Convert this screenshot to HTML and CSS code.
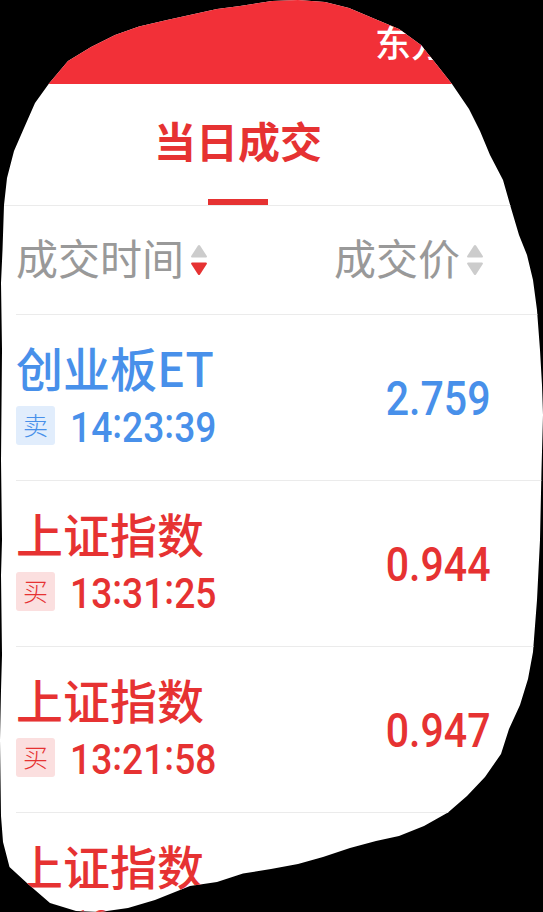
FILE: index.html
```
<!DOCTYPE html>
<html lang="zh-CN">
<head>
	<meta charset="UTF-8" />
	<meta name="viewport" content="width=device-width, initial-scale=1.0" />
	<title>当日成交</title>
	<link rel="stylesheet" href="styles.css">
</head>
<body>
	<div class="screen">
		<header class="topbar">东方</header>
		<nav class="tabs">
			<a class="tab">当日成交</a>
		</nav>
		<div class="list-head">
			<div class="col">成交时间
				<svg class="sort" viewBox="0 0 18 32" width="18" height="32">
					<path class="off" d="M8 1.5Q9 .5 10 1.5L16.8 12Q17.4 13.5 16 13.5H2Q.6 13.5 1.2 12Z"/>
					<path class="on" d="M8 30.5Q9 31.5 10 30.5L16.8 20Q17.4 18.5 16 18.5H2Q.6 18.5 1.2 20Z"/>
				</svg>
			</div>
			<div class="col">成交价
				<svg class="sort" viewBox="0 0 18 32" width="18" height="32">
					<path class="off" d="M8 1.5Q9 .5 10 1.5L16.8 12Q17.4 13.5 16 13.5H2Q.6 13.5 1.2 12Z"/>
					<path class="off" d="M8 30.5Q9 31.5 10 30.5L16.8 20Q17.4 18.5 16 18.5H2Q.6 18.5 1.2 20Z"/>
				</svg>
			</div>
		</div>
		<ul class="deals">
			<li class="deal sell">
				<div class="info">
					<strong class="name">创业板ET</strong>
					<div class="meta"><span class="tag">卖</span><span class="time">14<b class="colon">:</b>23<b class="colon">:</b>39</span></div>
				</div>
				<span class="price">2.759</span>
			</li>
			<li class="deal buy">
				<div class="info">
					<strong class="name">上证指数</strong>
					<div class="meta"><span class="tag">买</span><span class="time">13<b class="colon">:</b>31<b class="colon">:</b>25</span></div>
				</div>
				<span class="price">0.944</span>
			</li>
			<li class="deal buy">
				<div class="info">
					<strong class="name">上证指数</strong>
					<div class="meta"><span class="tag">买</span><span class="time">13<b class="colon">:</b>21<b class="colon">:</b>58</span></div>
				</div>
				<span class="price">0.947</span>
			</li>
			<li class="deal buy">
				<div class="info">
					<strong class="name">上证指数</strong>
					<div class="meta"><span class="tag"></span><span class="time">13</span></div>
				</div>
			</li>
		</ul>
	</div>
</body>
</html>
```
FILE: styles.css
```
*{
	box-sizing: border-box;
}
body{
	margin: 0;
	overflow: hidden;
	background: #000;
	font-family: "Noto Sans CJK SC", sans-serif;
}
/* freehand outline around the visible part */
.screen{
	width: 543px;
	height: 912px;
	overflow: hidden;
	background: #fff;
	clip-path: polygon(
		298px 0, 325px 2px, 349px 8px, 375px 19px, 399px 29px, 421px 45px, 437px 65px, 452px 84px,
		469px 109px, 480px 131px, 490px 155px, 503px 180px, 511px 208px, 519px 235px, 527px 255px,
		533px 280px, 537px 310px, 540px 350px, 542px 385px, 543px 415px, 541.5px 470px, 540px 540px,
		537px 600px, 533px 652px, 528px 679px, 520px 705px, 509px 729px, 501px 754px, 485px 777px,
		467px 796px, 448px 812.5px, 424px 826px, 399px 836px, 376px 841px, 350px 848px, 323px 857px,
		298px 864px, 271px 869px, 243px 873.5px, 217px 882px, 190px 886px, 155px 900px, 128px 908px,
		100px 912px, 76px 911px, 50px 903px, 28px 884px, 9.5px 867px, 3px 842px, 1px 816px,
		0 740px, 1px 690px, 2px 655px, 1px 575px, 2px 540px, 1px 460px, 2px 350px, 1px 283px, 2.5px 250px,
		4px 205px, 7px 178px, 14px 151px, 24px 128px, 35px 103px, 49px 83.5px, 68px 61px,
		91px 47px, 115px 35px, 139px 26.5px, 167px 20px, 217px 9px, 240px 6px, 272px 1px
	);
}
.topbar{
	height: 84px;
	padding: 14px 0 0 375px;
	background: #f23038;
	color: #fff;
	font-size: 36px;
	font-weight: 500;
	line-height: 54px;
}
.tabs{
	display: flex;
	height: 122px;
	padding-left: 154px;
	border-bottom: 1px solid #ebebeb;
}
.tab{
	display: flex;
	flex-direction: column;
	align-items: center;
	justify-content: space-between;
	padding-top: 26px;
	color: #e63232;
	font-size: 42px;
	font-weight: 700;
	line-height: 60px;
}
.tab::after{
	content: "";
	width: 60px;
	height: 6px;
	background: #e63232;
}
.list-head{
	display: flex;
	justify-content: space-between;
	height: 109px;
	margin-left: 16px;
	padding: 0 59px 7px 0;
	border-bottom: 1px solid #ebebeb;
}
.col{
	display: flex;
	align-items: center;
	gap: 6px;
	color: #999;
	font-size: 42px;
}
.sort{
	margin-top: 6px;
}
.off{
	fill: #ccc;
}
.on{
	fill: #e63232;
}
.deals{
	margin: 0 0 0 16px;
	padding: 0;
	list-style: none;
}
.deal{
	display: flex;
	align-items: center;
	justify-content: space-between;
	height: 166px;
	padding-right: 53px;
	border-bottom: 1px solid #ebebeb;
}
.sell{
	color: #4890ea;
}
.buy{
	color: #e63232;
}
.name{
	display: block;
	height: 66px;
	margin-top: -10px;
	font-size: 47px;
	font-weight: 500;
	line-height: 61px;
}
.meta{
	display: flex;
	align-items: center;
	gap: 15px;
	height: 48px;
}
.tag{
	width: 39px;
	height: 39px;
	border-radius: 3px;
	background: #fbdfdf;
	font-size: 25px;
	font-weight: 300;
	line-height: 36px;
	text-align: center;
}
.sell .tag{
	background: #e1edfc;
}
.time, .price{
	font-family: Roboto, sans-serif;
	font-weight: 500;
}
.time{
	padding-top: 5px;
	font-size: 42px;
	line-height: 48px;
	transform: scaleX(.885);
	transform-origin: left;
}
.colon{
	display: inline-block;
	font-weight: 500;
	transform: translateY(-4px);
}
.price{
	padding-top: 2px;
	font-size: 48px;
	transform: scaleX(.855);
	transform-origin: right;
}
```
